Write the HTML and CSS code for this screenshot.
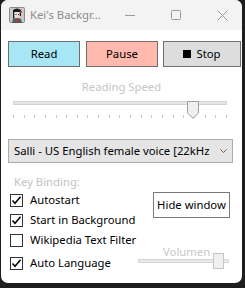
FILE: index.html
```html
<!DOCTYPE html>
<html>
<head>
<meta charset="utf-8">
<link rel="stylesheet" href="styles.css">
</head>
<body>
<div class="window">
  <div class="titlebar">
    <svg class="app-icon" viewBox="0 0 16 16" width="16" height="16">
      <rect x="0.5" y="0.5" width="15" height="15" rx="1" fill="#c9c9c9" stroke="#8a8a8a"/>
      <path d="M4 3 Q8 0 12 3 L12 9 L10.5 9 L10.5 5 L5.5 5 L5.5 11 L4 12 Z" fill="#1c1c1c"/>
      <path d="M5.5 5 L10.5 5 L10.5 10 Q8 12 5.5 10 Z" fill="#f1ddd6"/>
      <rect x="6.5" y="7" width="1" height="1" fill="#222"/>
      <rect x="9" y="7" width="1" height="1" fill="#222"/>
      <path d="M3 16 L4 12 Q8 10 12 12 L13 16 Z" fill="#5a5a5a"/>
      <rect x="7" y="12" width="2" height="2" fill="#c23a3a"/>
      <rect x="11" y="4" width="2" height="2" fill="#c23a3a"/>
    </svg>
    <span class="title">Kei's Backgr...</span>
    <div class="captions">
      <div class="cap"><svg width="10" height="10" viewBox="0 0 10 10"><line x1="0" y1="5.5" x2="10" y2="5.5" stroke="#9a9a9a" stroke-width="1"/></svg></div>
      <div class="cap"><svg width="10" height="10" viewBox="0 0 10 10"><rect x="0.5" y="0.5" width="9" height="9" rx="1" fill="none" stroke="#9a9a9a" stroke-width="1"/></svg></div>
      <div class="cap"><svg width="11" height="11" viewBox="0 0 11 11"><path d="M0.5 0.5 L10.5 10.5 M10.5 0.5 L0.5 10.5" stroke="#9a9a9a" stroke-width="1"/></svg></div>
    </div>
  </div>

  <div class="content">
    <div class="buttons">
      <div class="btn btn-read">Read</div>
      <div class="btn btn-pause">Pause</div>
      <div class="btn btn-stop"><span class="stop-sq"></span>Stop</div>
    </div>

    <div class="speed-label">Reading Speed</div>

    <div class="slider">
      <div class="track"></div>
      <svg class="thumb" width="12" height="18" viewBox="0 0 12 18">
        <path d="M0.5 0.5 L11.5 0.5 L11.5 12 L6 17.3 L0.5 12 Z" fill="#efefef" stroke="#9e9e9e" stroke-width="1"/>
      </svg>
      <div class="ticks">
        <i></i><i></i><i></i><i></i><i></i><i></i><i></i><i></i><i></i><i></i><i></i><i></i><i></i><i></i><i></i><i></i><i></i><i></i><i></i><i></i><i></i>
      </div>
    </div>

    <div class="dropdown">
      <span class="dd-text">Salli - US English female voice [22kHz</span>
      <svg class="chev" width="7" height="4" viewBox="0 0 7 4"><path d="M0.5 0.5 L3.5 3.5 L6.5 0.5" fill="none" stroke="#606060" stroke-width="1"/></svg>
    </div>

    <div class="bottom">
      <div class="left-col">
        <div class="key-label">Key Binding:</div>
        <div class="check-row">
          <span class="box"><svg width="11" height="11" viewBox="0 0 11 11"><path d="M1.5 5.5 L4 8.3 L9.5 1.8" fill="none" stroke="#000" stroke-width="1.5"/></svg></span>
          <span>Autostart</span>
        </div>
        <div class="check-row">
          <span class="box"><svg width="11" height="11" viewBox="0 0 11 11"><path d="M1.5 5.5 L4 8.3 L9.5 1.8" fill="none" stroke="#000" stroke-width="1.5"/></svg></span>
          <span>Start in Background</span>
        </div>
        <div class="check-row">
          <span class="box"></span>
          <span>Wikipedia Text Filter</span>
        </div>
        <div class="check-row last">
          <span class="box"><svg width="11" height="11" viewBox="0 0 11 11"><path d="M1.5 5.5 L4 8.3 L9.5 1.8" fill="none" stroke="#000" stroke-width="1.5"/></svg></span>
          <span>Auto Language</span>
        </div>
      </div>
      <div class="right-col">
        <div class="btn btn-hide">Hide window</div>
        <div class="volume">
          <div class="vol-track"></div>
          <span class="vol-label">Volumen</span>
          <div class="vol-thumb"></div>
        </div>
      </div>
    </div>
  </div>
</div>
</body>
</html>
```

FILE: styles.css
```css
* { box-sizing: border-box; }
html, body { margin: 0; padding: 0; }
body {
  width: 245px;
  height: 288px;
  background: #1e1e1e;
  overflow: hidden;
  font-family: "Noto Sans", "Open Sans", sans-serif;
  font-size: 11.3px;
  color: #000;
}
.window {
  margin-left: 1px;
  width: 241px;
  height: 283px;
  background: #fff;
  border-radius: 7px;
  overflow: hidden;
}
.titlebar {
  height: 30px;
  background: #f3f3f3;
  display: flex;
  align-items: center;
}
.app-icon { margin-left: 8px; flex: none; }
.title {
  margin-left: 5px;
  color: #8c8c8c;
  line-height: 16px;
  white-space: nowrap;
}
.captions {
  margin-left: auto;
  margin-right: -3px;
  display: flex;
  height: 30px;
  flex: none;
}
.cap {
  width: 46px;
  display: flex;
  align-items: center;
  justify-content: center;
}
.content { padding: 11px 0 0 7px; }

.buttons { display: flex; }
.btn {
  height: 26px;
  border: 1px solid #6f6f6f;
  display: flex;
  align-items: center;
  justify-content: center;
  line-height: 16px;
  white-space: nowrap;
}
.btn-read { width: 72px; background: #a7e6f5; }
.btn-pause { width: 72px; background: #ffb9ad; margin: 0 5px 0 6px; }
.btn-stop { width: 78px; background: #dddddd; }
.stop-sq {
  width: 8px; height: 8px;
  background: #000;
  margin-right: 5px;
}

.speed-label {
  margin-top: 12px;
  line-height: 16px;
  text-align: center;
  color: #c6c6c6;
  padding-right: 7px;
}
.slider {
  position: relative;
  margin: 6px 0 0 5px;
  width: 214px;
  height: 23px;
}
.track {
  margin-top: 6px;
  height: 4px;
  background: #e7e7e7;
  border: 1px solid #d4d4d4;
}
.thumb { position: absolute; left: 174px; top: 0; }
.ticks {
  margin-top: 10px;
  height: 3px;
  display: flex;
  justify-content: space-between;
}
.ticks i { width: 1px; height: 3px; background: #c6c6c6; }

.dropdown {
  margin-top: 15px;
  width: 225px;
  height: 24px;
  background: #e5e5e5;
  border: 1px solid #acacac;
  display: flex;
  align-items: center;
  padding: 0 5px 0 5px;
}
.dd-text {
  white-space: nowrap;
  flex: 1;
  line-height: 16px;
}
.chev { margin-left: 6px; flex: none; }

.bottom {
  display: grid;
  grid-template-columns: 1fr auto;
}
.left-col { padding-left: 2px; }
.key-label {
  margin-top: 11px;
  margin-left: 4px;
  line-height: 16px;
  color: #c2c2c2;
}
.check-row {
  height: 20px;
  display: flex;
  align-items: center;
  white-space: nowrap;
  line-height: 16px;
}
.check-row.last { margin-top: 3px; }
.box {
  width: 13px; height: 13px;
  border: 1px solid #333;
  background: #fff;
  margin-right: 7px;
  display: flex;
  align-items: center;
  justify-content: center;
  flex: none;
}
.right-col {
  display: flex;
  flex-direction: column;
  align-items: flex-end;
  padding-right: 12px;
}
.btn-hide {
  margin-top: 29px;
  width: 77px;
  background: #fff;
  border-color: #7a7a7a;
}
.volume {
  position: relative;
  margin-top: 35px;
  margin-right: 1px;
  width: 91px;
  height: 16px;
}
.vol-track {
  margin-top: 6px;
  height: 4px;
  background: #e9e9e9;
  border: 1px solid #d6d6d6;
}
.vol-label {
  position: absolute;
  left: 25px;
  top: -8px;
  line-height: 14px;
  color: #c8c8c8;
}
.vol-thumb {
  position: absolute;
  left: 75px;
  top: 0;
  width: 11px;
  height: 16px;
  background: #f0f0f0;
  border: 1px solid #c6c6c6;
}
```
